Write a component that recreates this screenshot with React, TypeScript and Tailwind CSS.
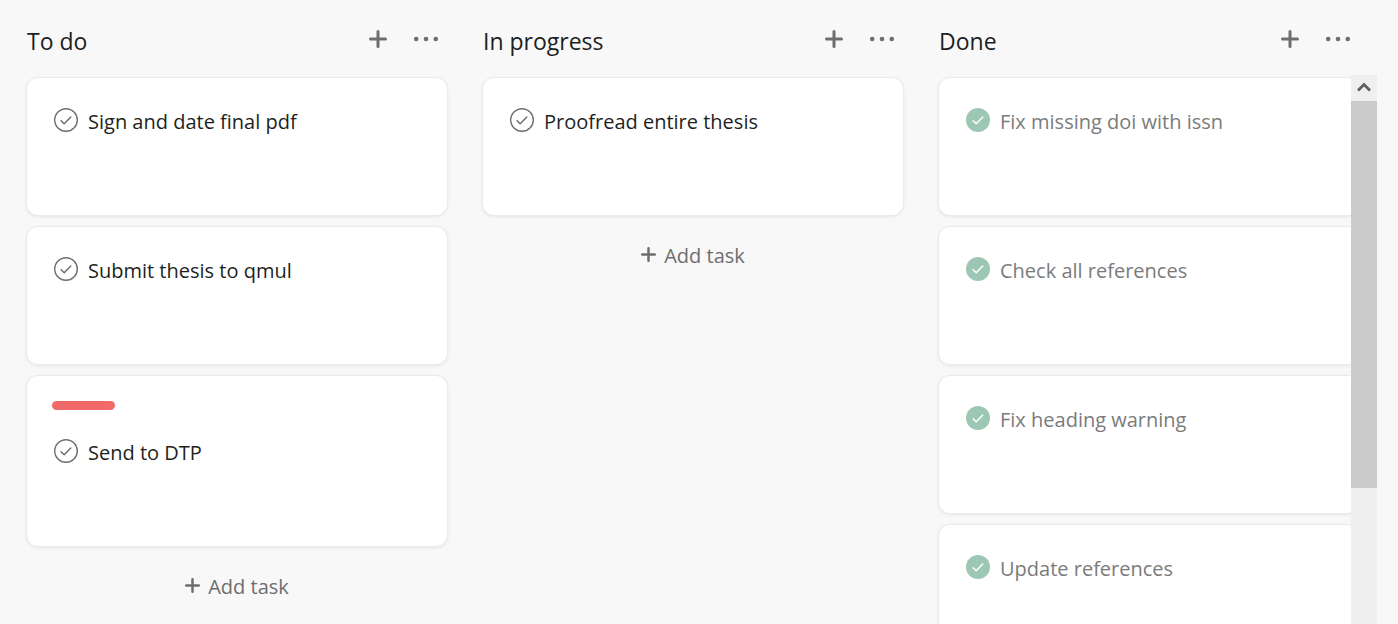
import React from "react";

type Task = { title: string; done?: boolean; label?: boolean };
type ColumnData = { title: string; tasks: Task[]; scrolls?: boolean };

const columns: ColumnData[] = [
  {
    title: "To do",
    tasks: [
      { title: "Sign and date final pdf" },
      { title: "Submit thesis to qmul" },
      { title: "Send to DTP", label: true },
    ],
  },
  { title: "In progress", tasks: [{ title: "Proofread entire thesis" }] },
  {
    title: "Done",
    scrolls: true,
    tasks: [
      { title: "Fix missing doi with issn", done: true },
      { title: "Check all references", done: true },
      { title: "Fix heading warning", done: true },
      { title: "Update references", done: true },
    ],
  },
];

function PlusIcon({ className }: { className: string }) {
  return (
    <svg viewBox="0 0 18 18" className={className} aria-hidden="true">
      <path d="M9 1.5v15M1.5 9h15" fill="none" stroke="currentColor" strokeWidth="3" strokeLinecap="round" />
    </svg>
  );
}

function DotsIcon() {
  return (
    <svg viewBox="0 0 26 6" className="h-1.5 w-[26px]" fill="currentColor" aria-hidden="true">
      <circle cx="3.2" cy="3" r="2.3" />
      <circle cx="13" cy="3" r="2.3" />
      <circle cx="22.8" cy="3" r="2.3" />
    </svg>
  );
}

function CheckIcon({ done }: { done?: boolean }) {
  return (
    <svg viewBox="0 0 24 24" className="size-6" fill="none" aria-hidden="true">
      {done ? (
        <circle cx="12" cy="12" r="12" fill="#9dc7b5" />
      ) : (
        <circle cx="12" cy="12" r="11.3" stroke="#6d6e6f" strokeWidth="1.4" />
      )}
      <path
        d="M7.1 12.7l3.1 3 6.6-6.7"
        stroke={done ? "#ffffff" : "#6d6e6f"}
        strokeWidth="1.5"
        strokeLinecap="round"
        strokeLinejoin="round"
      />
    </svg>
  );
}

function Card({ task }: { task: Task }) {
  return (
    <li className="shrink-0 rounded-xl border border-[#edeaea] bg-white px-[27px] pt-[30px] pb-[79px] shadow-[0_1px_3px_rgba(109,110,111,0.12)]">
      {task.label && <div className="-mt-[5px] -ml-0.5 mb-[29px] h-[9px] w-[63px] rounded-full bg-[#f06a6a]" />}
      <div className="flex h-7 items-start gap-2.5">
        <button type="button" aria-label={`Toggle completion of ${task.title}`}>
          <CheckIcon done={task.done} />
        </button>
        <span className={task.done ? "text-xl leading-7 whitespace-nowrap text-[#7b7b7c]" : "text-xl leading-7 whitespace-nowrap text-[#1e1f21]"}>
          {task.title}
        </span>
      </div>
    </li>
  );
}

function ScrollBar() {
  return (
    <div className="flex w-[26px] shrink-0 flex-col bg-[#efefef]">
      <button type="button" aria-label="Scroll up" className="flex h-[26px] shrink-0 items-center justify-center pb-0.5 text-[#606060]">
        <svg viewBox="0 0 14 10" className="h-2.5 w-3.5" aria-hidden="true">
          <path d="M1 8.5L7 2.5l6 6" fill="none" stroke="currentColor" strokeWidth="3" />
        </svg>
      </button>
      <div className="min-h-0 flex-1">
        <div className="h-[74%] bg-[#cbcbcb]" />
      </div>
    </div>
  );
}

function Column({ column }: { column: ColumnData }) {
  return (
    <section className="flex min-h-0 min-w-0 flex-col">
      <header className="flex h-[75px] shrink-0 items-center justify-between pt-1.5 pr-[26px] pl-[18px]">
        <h2 className="text-[23px] leading-[30px] text-[#1e1f21]">{column.title}</h2>
        <div className="mb-1 flex items-center gap-[26px] text-[#6d6e6f]">
          <button type="button" aria-label={`Add task to ${column.title}`}>
            <PlusIcon className="size-[18px]" />
          </button>
          <button type="button" aria-label={`More actions for ${column.title}`}>
            <DotsIcon />
          </button>
        </div>
      </header>
      {column.scrolls ? (
        <div className="flex min-h-0 flex-1">
          <div className="min-w-0 flex-1 overflow-hidden pt-0.5 pl-[17px]">
            <ul className="-mr-[9px] flex flex-col gap-2.5">
              {column.tasks.map((t) => (
                <Card key={t.title} task={t} />
              ))}
            </ul>
          </div>
          <ScrollBar />
        </div>
      ) : (
        <div className="flex flex-col items-center px-[17px] pt-0.5">
          <ul className="flex w-full flex-col gap-2.5">
            {column.tasks.map((t) => (
              <Card key={t.title} task={t} />
            ))}
          </ul>
          <button type="button" className="mt-6 flex items-center gap-2 text-xl leading-8 text-[#6d6e6f]">
            <PlusIcon className="mb-1 size-[15px]" />
            Add task
          </button>
        </div>
      )}
    </section>
  );
}

export default function App() {
  return (
    <main className="grid h-screen grid-cols-3 overflow-hidden bg-[#f8f8f8] pr-[21px] pl-[9px] font-['Open_Sans','Noto_Sans',sans-serif]">
      {columns.map((c) => (
        <Column key={c.title} column={c} />
      ))}
    </main>
  );
}
